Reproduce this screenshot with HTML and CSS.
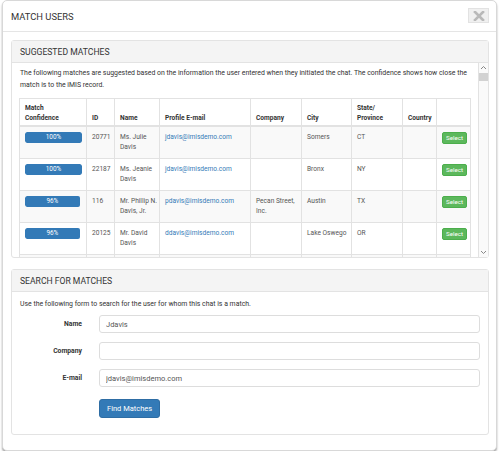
FILE: index.html
```html
<!DOCTYPE html>
<html lang="en">
<head>
  <meta charset="UTF-8" />
  <title>Match Users</title>
  <link rel="stylesheet" href="styles.css">
</head>
<body>
  <div class="modal">
    <div class="modal-header">
      <h2>Match Users</h2>
      <button class="close-btn" title="Close">
        <svg width="12" height="10" viewBox="0 0 12 10"><path d="M2 1 L10 9 M10 1 L2 9" stroke="#b9b9b9" stroke-width="2.6" stroke-linecap="square" fill="none"/></svg>
      </button>
    </div>

    <div class="modal-body">
      <div class="panel panel-suggested">
        <div class="panel-heading">Suggested Matches</div>
        <div class="scroll-wrap">
          <div class="scroll-content">
            <p class="intro">The following matches are suggested based on the information the user entered when they initiated the chat. The confidence shows how close the match is to the iMIS record.</p>
            <table class="matches">
              <colgroup>
                <col style="width:67px"><col style="width:28px"><col style="width:45px"><col style="width:91px"><col style="width:51px"><col style="width:50px"><col style="width:51px"><col style="width:34px"><col style="width:34px">
              </colgroup>
              <thead>
                <tr>
                  <th>Match<br>Confidence</th>
                  <th>ID</th>
                  <th>Name</th>
                  <th>Profile E-mail</th>
                  <th>Company</th>
                  <th>City</th>
                  <th>State/<br>Province</th>
                  <th>Country</th>
                  <th></th>
                </tr>
              </thead>
              <tbody>
                <tr>
                  <td><div class="progress"><div class="bar" style="width:100%">100%</div></div></td>
                  <td>20771</td>
                  <td>Ms. Julie Davis</td>
                  <td><a href="#">jdavis@imisdemo.com</a></td>
                  <td></td>
                  <td>Somers</td>
                  <td>CT</td>
                  <td></td>
                  <td><button class="select-btn">Select</button></td>
                </tr>
                <tr>
                  <td><div class="progress"><div class="bar" style="width:100%">100%</div></div></td>
                  <td>22187</td>
                  <td>Ms. Jeanie Davis</td>
                  <td><a href="#">jdavis@imisdemo.com</a></td>
                  <td></td>
                  <td>Bronx</td>
                  <td>NY</td>
                  <td></td>
                  <td><button class="select-btn">Select</button></td>
                </tr>
                <tr>
                  <td><div class="progress"><div class="bar" style="width:96%">96%</div></div></td>
                  <td>116</td>
                  <td>Mr. Phillip N. Davis, Jr.</td>
                  <td><a href="#">pdavis@imisdemo.com</a></td>
                  <td>Pecan Street, Inc.</td>
                  <td>Austin</td>
                  <td>TX</td>
                  <td></td>
                  <td><button class="select-btn">Select</button></td>
                </tr>
                <tr>
                  <td><div class="progress"><div class="bar" style="width:96%">96%</div></div></td>
                  <td>20125</td>
                  <td>Mr. David Davis</td>
                  <td><a href="#">ddavis@imisdemo.com</a></td>
                  <td></td>
                  <td>Lake Oswego</td>
                  <td>OR</td>
                  <td></td>
                  <td><button class="select-btn">Select</button></td>
                </tr>
                <tr class="more">
                  <td></td><td></td><td></td><td></td><td></td><td></td><td></td><td></td><td></td>
                </tr>
              </tbody>
            </table>
          </div>
          <div class="scrollbar">
            <div class="sb-btn">
              <svg width="7" height="5" viewBox="0 0 7 5"><path d="M1 4 L3.5 1.5 L6 4" stroke="#888" stroke-width="1" fill="none"/></svg>
            </div>
            <div class="sb-thumb"></div>
            <div class="sb-track"></div>
            <div class="sb-btn">
              <svg width="7" height="5" viewBox="0 0 7 5"><path d="M1 1 L3.5 3.5 L6 1" stroke="#888" stroke-width="1" fill="none"/></svg>
            </div>
          </div>
        </div>
      </div>

      <div class="panel panel-search">
        <div class="panel-heading">Search for Matches</div>
        <div class="panel-body">
          <p class="intro">Use the following form to search for the user for whom this chat is a match.</p>
          <form class="search-form" onsubmit="event.preventDefault();">
            <label for="name">Name</label>
            <input type="text" id="name" value="Jdavis">
            <label for="company">Company</label>
            <input type="text" id="company">
            <label for="email">E-mail</label>
            <input type="text" id="email" value="jdavis@imisdemo.com">
            <span></span>
            <div><button type="submit" class="find-btn">Find Matches</button></div>
          </form>
        </div>
      </div>
    </div>
  </div>
</body>
</html>
```

FILE: styles.css
```css
* {
  box-sizing: border-box;
}
body {
  margin: 0;
  background: #fff;
  font-family: Roboto, "Liberation Sans", sans-serif;
  color: #555;
}
.modal {
  width: 495px;
  height: 451px;
  margin-left: 2px;
  border: 1px solid #d8d8d8;
  border-radius: 5px;
  box-shadow: 0 2px 2px rgba(0, 0, 0, 0.35);
  background: #fff;
  display: flex;
  flex-direction: column;
}
.modal-header {
  height: 31px;
  padding: 0 7px 0 8px;
  border-bottom: 1px solid #e5e5e5;
  display: flex;
  align-items: center;
  justify-content: space-between;
}
.modal-header h2 {
  margin: 0;
  font-size: 9.4px;
  font-weight: 400;
  text-transform: uppercase;
  color: #333;
}
.close-btn {
  width: 21px;
  height: 15px;
  margin-top: -1px;
  padding: 0;
  background: #f0f0f0;
  border: 1px solid #e2e2e2;
  display: flex;
  align-items: center;
  justify-content: center;
}
.modal-body {
  padding: 8px 7px 0 8px;
  display: flex;
  flex-direction: column;
  gap: 11px;
}
.panel {
  border: 1px solid #e3e3e3;
  border-radius: 3px;
  background: #fff;
}
.panel-heading {
  height: 22px;
  padding: 0 8px;
  background: #f4f4f4;
  border-bottom: 1px solid #e3e3e3;
  display: flex;
  align-items: center;
  font-size: 8.6px;
  text-transform: uppercase;
  color: #333;
}
.intro {
  margin: 0;
  font-size: 6.9px;
  line-height: 11.5px;
  color: #333;
}

/* suggested matches */
.scroll-wrap {
  height: 194px;
  display: flex;
}
.scroll-content {
  flex: 1;
  overflow: hidden;
  padding: 5px 8px 0 8px;
}
.scroll-content .intro {
  margin-bottom: 7px;
}
.matches {
  width: 451px;
  margin-left: -1px;
  table-layout: fixed;
  border-collapse: collapse;
  font-size: 6.6px;
  line-height: 10px;
}
.matches th, .matches td {
  border: 1px solid #e2e2e2;
  padding: 4px 2px 5px 5px;
  text-align: left;
}
.matches th {
  vertical-align: bottom;
  padding-bottom: 2px;
  font-weight: 700;
  color: #333;
  border-bottom-width: 2px;
}
.matches td {
  vertical-align: top;
  height: 32px;
  padding-top: 5px;
  color: #555;
}
.matches tbody tr:nth-child(odd) {
  background: #f9f9f9;
}
.matches a {
  color: #337ab7;
  text-decoration: none;
}
.progress {
  width: 57px;
  height: 11px;
  border-radius: 2px;
  overflow: hidden;
}
.bar {
  height: 100%;
  background: #337ab7;
  border-radius: 2px;
  color: #fff;
  font-size: 6.4px;
  line-height: 11px;
  text-align: center;
}
.select-btn {
  width: 25px;
  height: 12px;
  padding: 0;
  background: #5cb85c;
  border: 1px solid #4cae4c;
  border-radius: 2px;
  color: #fff;
  font-family: inherit;
  font-size: 6.2px;
}
.scrollbar {
  width: 10px;
  border-left: 1px solid #e2e2e2;
  display: flex;
  flex-direction: column;
  background: #fafafa;
}
.sb-btn {
  height: 9px;
  display: flex;
  align-items: center;
  justify-content: center;
}
.sb-thumb {
  height: 8px;
  margin: 1px 0 0 0;
  background: #d2d2d2;
}
.sb-track {
  flex: 1;
}

/* search form */
.panel-body {
  padding: 6px 8px 16px 8px;
}
.panel-search .intro {
  margin-bottom: 5px;
  line-height: 12px;
}
.search-form {
  display: grid;
  grid-template-columns: 62px 1fr;
  column-gap: 17px;
  row-gap: 9px;
  align-items: center;
}
.search-form label {
  text-align: right;
  font-size: 6.8px;
  font-weight: 700;
  color: #333;
}
.search-form input {
  height: 18px;
  padding: 0 6px;
  border: 1px solid #ddd;
  border-radius: 3px;
  font-family: inherit;
  font-size: 7.5px;
  color: #555;
}
.find-btn {
  height: 19px;
  padding: 0 7px;
  background: #337ab7;
  border: 1px solid #2e6da4;
  border-radius: 3px;
  color: #fff;
  font-family: inherit;
  font-size: 7.5px;
}
```
